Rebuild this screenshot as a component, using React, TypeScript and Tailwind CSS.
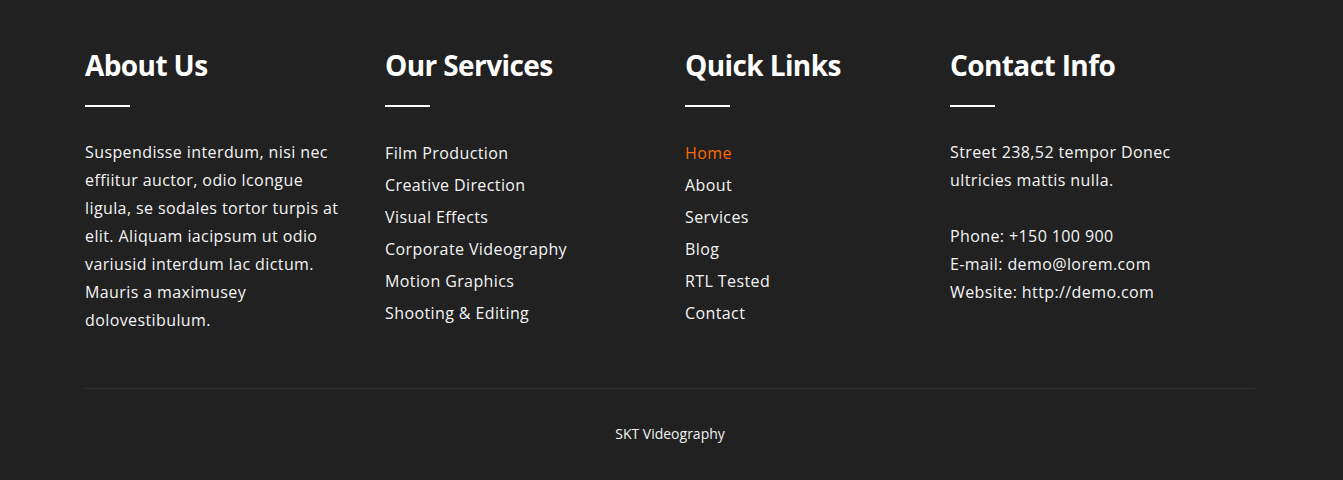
const services = [
  "Film Production",
  "Creative Direction",
  "Visual Effects",
  "Corporate Videography",
  "Motion Graphics",
  "Shooting & Editing",
]

const quickLinks = [
  { name: "Home", active: true },
  { name: "About" },
  { name: "Services" },
  { name: "Blog" },
  { name: "RTL Tested" },
  { name: "Contact" },
]

const aboutLines = [
  "Suspendisse interdum, nisi nec",
  "effiitur auctor, odio lcongue",
  "ligula, se sodales tortor turpis at",
  "elit. Aliquam iacipsum ut odio",
  "variusid interdum lac dictum.",
  "Mauris a maximusey",
  "dolovestibulum.",
]

const Heading = ({ title }: { title: string }) => (
  <div>
    <h3 className="text-[28px] font-bold leading-[32px] tracking-[-0.6px] text-white">{title}</h3>
    <div className="mt-[24px] h-[2px] w-[45px] bg-white" />
  </div>
)

export default function App() {
  return (
    <footer
      className="min-h-[480px] w-full bg-[#212121] pl-[85px] text-white"
      style={{ fontFamily: '"Open Sans", sans-serif' }}
    >
      <div className="w-[1170px] pt-[49px]">
        <div className="flex text-[16px] tracking-[0.4px] text-[#f4f4f4]">
          <div className="w-[300px]">
            <Heading title="About Us" />
            <p className="mt-[31px] leading-[28px]">
              {aboutLines.map((line) => (
                <span key={line} className="block">
                  {line}
                </span>
              ))}
            </p>
          </div>
          <div className="w-[300px]">
            <Heading title="Our Services" />
            <ul className="mt-[35px] flex flex-col gap-[10px] leading-[22px]">
              {services.map((s) => (
                <li key={s}>{s}</li>
              ))}
            </ul>
          </div>
          <div className="w-[265px]">
            <Heading title="Quick Links" />
            <ul className="mt-[35px] flex flex-col gap-[10px] leading-[22px]">
              {quickLinks.map((l) => (
                <li key={l.name} className={l.active ? "text-[#ff6a00]" : ""}>
                  {l.name}
                </li>
              ))}
            </ul>
          </div>
          <div className="w-[305px]">
            <Heading title="Contact Info" />
            <p className="mt-[31px] leading-[28px]">
              Street 238,52 tempor Donec
              <br />
              ultricies mattis nulla.
            </p>
            <p className="mt-[28px] leading-[28px]">
              Phone: +150 100 900
              <br />
              E-mail: demo@lorem.com
              <br />
              Website: http://demo.com
            </p>
          </div>
        </div>
        <div className="mt-[54px] border-t border-[#2e3439]" />
        <div className="pt-[34px] text-center text-[14px] text-[#f1f1f1]">SKT Videography</div>
      </div>
    </footer>
  )
}
